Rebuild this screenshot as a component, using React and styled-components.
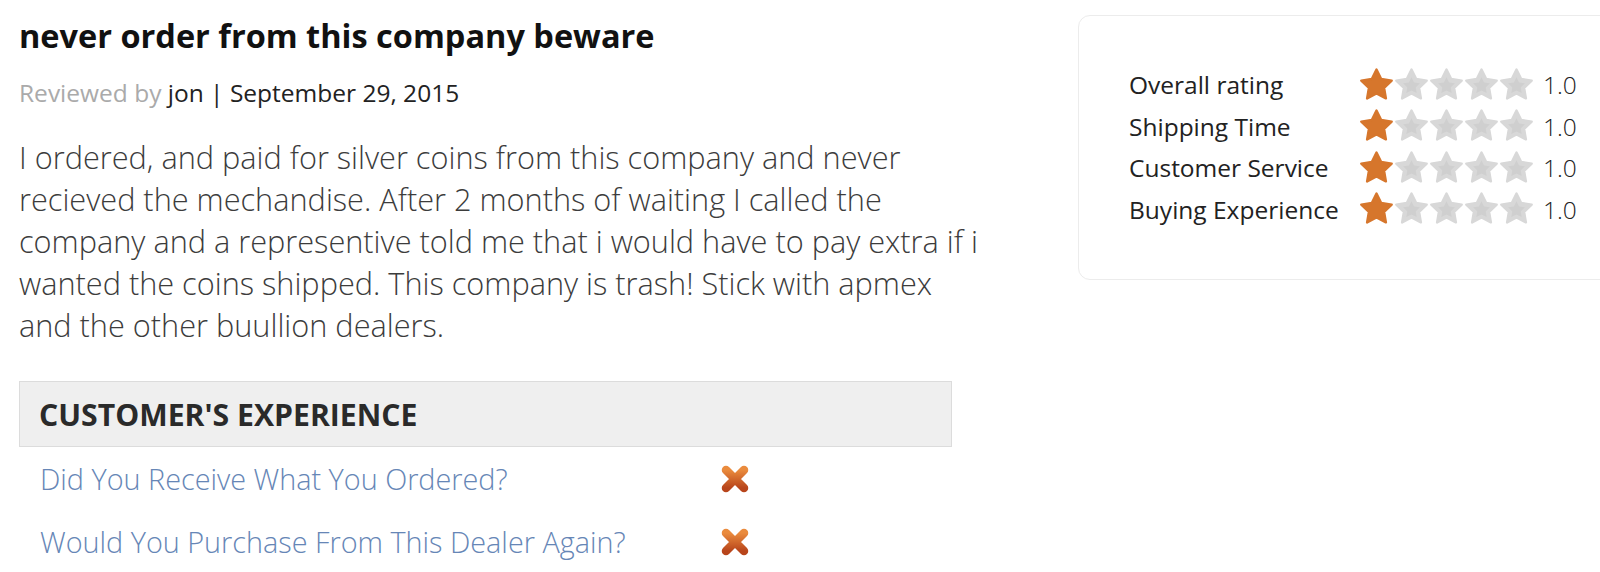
import styled, { createGlobalStyle } from "styled-components";

const Global = createGlobalStyle`
  body {
    margin: 0;
    background: #fff;
    font-family: "Open Sans", "Liberation Sans", sans-serif;
    overflow: hidden;
  }
`;

const Page = styled.div`
  width: 1600px;
  height: 572px;
  display: flex;
  align-items: flex-start;
  overflow: hidden;
`;

const Main = styled.div`
  flex: 0 0 960px;
  min-width: 0;
  padding: 16px 0 0 19px;
  box-sizing: border-box;
`;

const Title = styled.h1`
  margin: 0;
  font-size: 32.5px;
  line-height: 40px;
  font-weight: 700;
  color: #111;
  white-space: nowrap;
`;

const Meta = styled.div`
  margin-top: 22px;
  font-size: 24.5px;
  line-height: 30px;
  font-weight: 400;
  color: #222;
  white-space: nowrap;
`;

const Muted = styled.span`
  color: #aaa;
`;

const Body = styled.p`
  margin: 28px 0 0;
  font-size: 30.7px;
  line-height: 42px;
  font-weight: 300;
  color: #3c3c3c;
  white-space: nowrap;
`;

const Experience = styled.div`
  margin-top: 35px;
  width: 933px;
`;

const ExpHeader = styled.div`
  background: #efefef;
  border: 1px solid #dcdcdc;
  height: 64px;
  display: flex;
  align-items: center;
  padding-left: 19px;
  font-size: 30.2px;
  font-weight: 700;
  color: #2a2a2a;
`;

const Question = styled.div`
  display: grid;
  grid-template-columns: 680px 40px;
  align-items: center;
  height: 63px;
  padding-left: 21px;
  font-size: 28.8px;
  font-weight: 300;
  color: #6686b6;
  white-space: nowrap;
`;

const Card = styled.div`
  flex: 0 0 560px;
  margin: 15px 0 0 118px;
  height: 265px;
  box-sizing: border-box;
  border: 1px solid #ececec;
  border-radius: 12px;
  padding: 48px 0 0 50px;
`;

const RatingRow = styled.div`
  display: flex;
  align-items: center;
  height: 41.5px;
`;

const Label = styled.div`
  width: 230px;
  font-size: 24.5px;
  color: #222;
  white-space: nowrap;
`;

const Stars = styled.div`
  display: flex;
  width: 184px;
`;

const Value = styled.div`
  font-size: 24.5px;
  font-weight: 300;
  color: #222;
`;

const STAR =
  "M17.5 1.5 L22.2 11 L32.7 12.6 L25.1 20 L26.9 30.4 L17.5 25.5 L8.1 30.4 L9.9 20 L2.3 12.6 L12.8 11 Z";

const Star = ({ on }) => (
  <svg width="35" height="34" viewBox="0 0 35 34">
    <path
      d={STAR}
      fill={on ? "#d6762c" : "#d8d8d8"}
      stroke={on ? "#d6762c" : "#d8d8d8"}
      strokeWidth="2.4"
      strokeLinejoin="round"
    />
    {!on && (
      <path
        d={STAR}
        transform="translate(17.5 18) scale(0.55) translate(-17.5 -17.5)"
        fill="#cfcfcf"
      />
    )}
  </svg>
);

const Cross = () => (
  <svg width="30" height="30" viewBox="0 0 30 30">
    <defs>
      <linearGradient id="xg" x1="0" y1="0" x2="0" y2="1">
        <stop offset="0" stopColor="#ea8b3d" />
        <stop offset="1" stopColor="#b8451b" />
      </linearGradient>
    </defs>
    <path
      d="M6 6 L24 24 M24 6 L6 24"
      stroke="url(#xg)"
      strokeWidth="8.5"
      strokeLinecap="round"
    />
  </svg>
);

const ratings = ["Overall rating", "Shipping Time", "Customer Service", "Buying Experience"];

const lines = [
  "I ordered, and paid for silver coins from this company and never",
  "recieved the mechandise. After 2 months of waiting I called the",
  "company and a representive told me that i would have to pay extra if i",
  "wanted the coins shipped. This company is trash! Stick with apmex",
  "and the other buullion dealers.",
];

export default function App() {
  return (
    <Page>
      <Global />
      <Main>
        <Title>never order from this company beware</Title>
        <Meta>
          <Muted>Reviewed by</Muted> jon | September 29, 2015
        </Meta>
        <Body>
          {lines.map((l, i) => (
            <span key={i}>
              {l}
              {i < lines.length - 1 && <br />}
            </span>
          ))}
        </Body>
        <Experience>
          <ExpHeader>CUSTOMER'S EXPERIENCE</ExpHeader>
          <Question>
            <span>Did You Receive What You Ordered?</span>
            <Cross />
          </Question>
          <Question>
            <span>Would You Purchase From This Dealer Again?</span>
            <Cross />
          </Question>
        </Experience>
      </Main>
      <Card>
        {ratings.map((r) => (
          <RatingRow key={r}>
            <Label>{r}</Label>
            <Stars>
              {[0, 1, 2, 3, 4].map((i) => (
                <Star key={i} on={i === 0} />
              ))}
            </Stars>
            <Value>1.0</Value>
          </RatingRow>
        ))}
      </Card>
    </Page>
  );
}
